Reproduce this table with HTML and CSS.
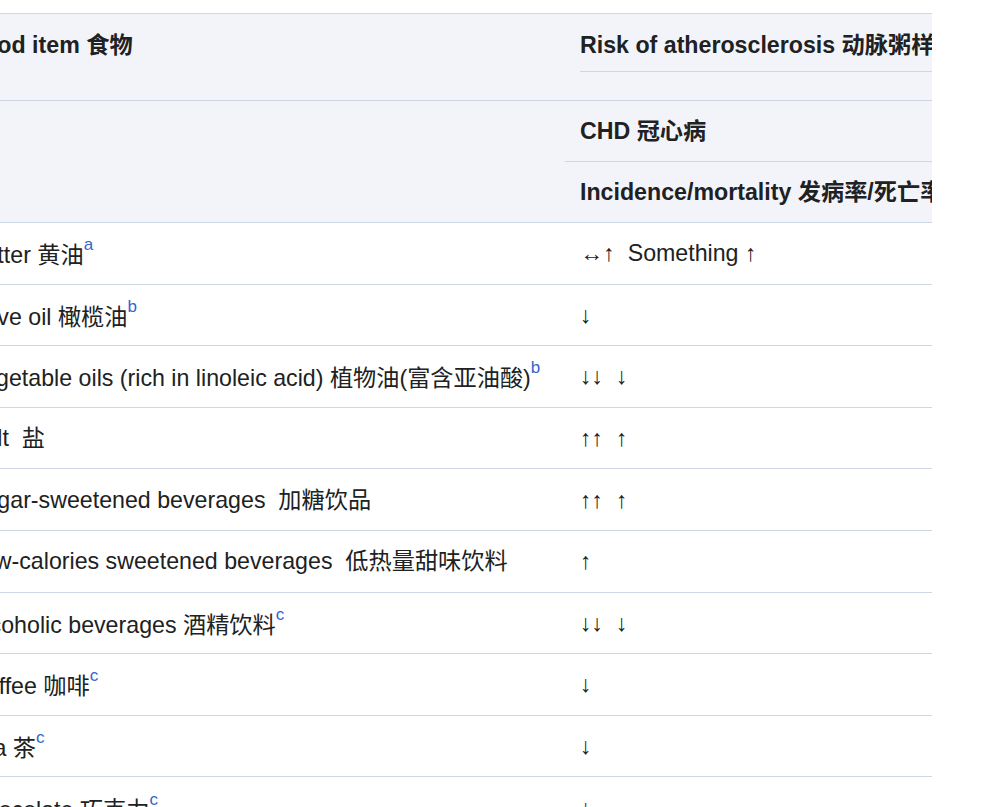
FILE: index.html
```html
<!DOCTYPE html>
<html lang="zh">
<head>
<meta charset="utf-8">
<title>Food and atherosclerosis</title>
<link rel="stylesheet" href="styles.css">
</head>
<body>
<div class="frame">
  <table class="risk-table">
    <thead>
      <tr class="h1">
        <th class="col-food">Food item 食物</th>
        <th class="col-risk"><div class="risk-title">Risk of atherosclerosis 动脉粥样硬化风险</div></th>
      </tr>
      <tr class="h2">
        <th class="col-food" rowspan="2"></th>
        <th class="col-risk">CHD 冠心病</th>
      </tr>
      <tr class="h3">
        <th class="col-risk">Incidence/mortality 发病率/死亡率</th>
      </tr>
    </thead>
    <tbody>
      <tr><td class="food">Butter 黄油<sup>a</sup></td><td class="risk">↔↑&nbsp; Something ↑</td></tr>
      <tr><td class="food">Olive oil 橄榄油<sup>b</sup></td><td class="risk">↓</td></tr>
      <tr><td class="food">Vegetable oils (rich in linoleic acid) 植物油(富含亚油酸)<sup>b</sup></td><td class="risk">↓↓&nbsp; ↓</td></tr>
      <tr><td class="food">Salt&nbsp; 盐</td><td class="risk">↑↑&nbsp; ↑</td></tr>
      <tr><td class="food">Sugar-sweetened beverages&nbsp; 加糖饮品</td><td class="risk">↑↑&nbsp; ↑</td></tr>
      <tr><td class="food">Low-calories sweetened beverages&nbsp; 低热量甜味饮料</td><td class="risk">↑</td></tr>
      <tr><td class="food">Alcoholic beverages 酒精饮料<sup>c</sup></td><td class="risk">↓↓&nbsp; ↓</td></tr>
      <tr><td class="food">Coffee 咖啡<sup>c</sup></td><td class="risk">↓</td></tr>
      <tr><td class="food">Tea 茶<sup>c</sup></td><td class="risk">↓</td></tr>
      <tr><td class="food">Chocolate 巧克力<sup>c</sup></td><td class="risk">↓</td></tr>
    </tbody>
  </table>
</div>
</body>
</html>
```

FILE: styles.css
```css
html, body {
  margin: 0;
  padding: 0;
  background: #ffffff;
}

body {
  font-family: "Liberation Sans", Arial, "Noto Sans CJK SC", sans-serif;
  color: #202122;
  font-size: 23.2px;
}

.frame {
  margin-top: 13px;
  width: 932px;
  overflow: hidden;
}

.risk-table {
  margin-left: -46px;
  border-collapse: collapse;
  table-layout: fixed;
  width: 1300px;
}

.risk-table .col-food {
  width: 581px;
}

.risk-table th,
.risk-table td {
  text-align: left;
  vertical-align: middle;
  padding: 0 15px;
  line-height: 30px;
  white-space: nowrap;
  border-top: 1px solid #cfd6e6;
  border-bottom: 1px solid #cfd6e6;
}

.risk-table th {
  background: #f3f4f9;
  font-weight: bold;
}

.risk-table tr.h1 th {
  height: 70px;
  vertical-align: top;
  padding-top: 16px;
}

.risk-title {
  padding-bottom: 11px;
  border-bottom: 1px solid #cfd6e6;
}

.risk-table tr.h2 th,
.risk-table tr.h3 th {
  height: 60px;
}

.risk-table td {
  height: 60.6px;
}

.risk-table sup {
  color: #3366cc;
  font-size: 17px;
  line-height: 1;
  vertical-align: 13px;
}
```
